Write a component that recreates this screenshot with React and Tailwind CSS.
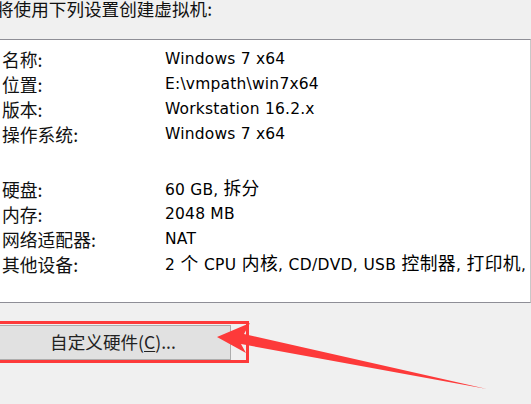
export default function App() {
  const cjk = "text-[17.8px] leading-[22px] [font-family:'Noto_Sans_CJK_SC',sans-serif]";
  const top = [
    ["名称:", "Windows 7 x64"],
    ["位置:", "E:\\vmpath\\win7x64"],
    ["版本:", "Workstation 16.2.x"],
    ["操作系统:", "Windows 7 x64"],
  ];
  const bottom = [
    ["硬盘:", <>60 GB, <span className={cjk}>拆分</span></>],
    ["内存:", "2048 MB"],
    ["网络适配器:", "NAT"],
    [
      "其他设备:",
      <span className="tracking-[0.35px]">
        2 <span className={cjk}>个</span> CPU <span className={cjk}>内核</span>, CD/DVD, USB{" "}
        <span className={cjk}>控制器</span>, <span className={cjk}>打印机</span>,{" "}
        <span className={cjk}>声卡</span>
      </span>,
    ],
  ];

  const Row = ({ label, value }) => (
    <div className="flex h-[25px] items-center overflow-x-clip whitespace-nowrap">
      <div className={`w-[165px] shrink-0 pl-[2px] text-[#111] ${cjk}`}>{label}</div>
      <div className="text-[15.5px] leading-[22px] tracking-[0.2px] text-black [font-family:'DejaVu_Sans','Noto_Sans_CJK_SC',sans-serif]">
        {value}
      </div>
    </div>
  );

  return (
    <div className="relative h-[404px] w-[531px] overflow-hidden bg-[#f0f0f0] [font-family:'Noto_Sans_CJK_SC',sans-serif]">
      <div className="h-[41px]">
        <div className="-ml-[4px] mt-[-2px] text-[17.6px] leading-[22px] text-[#111]">将使用下列设置创建虚拟机:</div>
      </div>

      <div className="h-[264px] border-y border-r border-y-[#8e8e96] border-r-[#c8c8c8] bg-white pt-[6px]">
        {top.map(([l, v]) => (
          <Row key={l} label={l} value={v} />
        ))}
        <div className="h-[30px]" />
        {bottom.map(([l, v]) => (
          <Row key={l} label={l} value={v} />
        ))}
      </div>

      <div className="pt-[18px]">
        <div className="flex h-[42px] w-[249px] items-center border-[3px] border-l-0 border-[#fd3a3a]">
          <button className="-ml-[5px] flex h-[35px] w-[236px] items-center justify-center border border-[#adadad] bg-[#e1e1e1] text-[17.6px] text-[#222]">
            自定义硬件(<span className="underline underline-offset-2">C</span>)...
          </button>
        </div>
      </div>

      <svg className="pointer-events-none absolute left-0 top-0" width="531" height="404">
        <polygon points="217,337 250,323 244,334 487,389 241,344 246,353" fill="#fd3a3a" />
      </svg>
    </div>
  );
}
